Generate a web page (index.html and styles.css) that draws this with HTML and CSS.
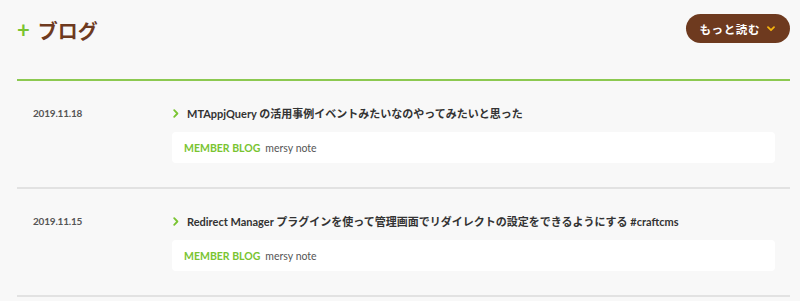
FILE: index.html
```html
<!DOCTYPE html>
<html lang="ja">
<head>
  <meta charset="UTF-8" />
  <title>ブログ</title>
  <link rel="stylesheet" href="styles.css">
</head>
<body>

  <section class="blog">
    <header>
      <h1><span class="plus">+</span>ブログ</h1>
      <a class="more" href="#">もっと読む
        <svg width="8" height="6" viewBox="0 0 8 6"><path d="M1 1.2 L4 4.2 L7 1.2" fill="none" stroke="#f6b40e" stroke-width="1.8" stroke-linecap="round" stroke-linejoin="round"/></svg>
      </a>
    </header>

    <ul class="posts">
      <li class="post">
        <div class="date">2019.11.18</div>
        <div class="body">
          <a class="title" href="#">
            <svg class="arrow" width="6" height="9" viewBox="0 0 6 9"><path d="M1.2 1.2 L4.4 4.5 L1.2 7.8" fill="none" stroke="#79c431" stroke-width="1.8" stroke-linecap="round" stroke-linejoin="round"/></svg>
            MTAppjQuery の活用事例イベントみたいなのやってみたいと思った
          </a>
          <div class="source"><span class="tag">MEMBER BLOG</span><span class="name">mersy note</span></div>
        </div>
      </li>
      <li class="post">
        <div class="date">2019.11.15</div>
        <div class="body">
          <a class="title" href="#">
            <svg class="arrow" width="6" height="9" viewBox="0 0 6 9"><path d="M1.2 1.2 L4.4 4.5 L1.2 7.8" fill="none" stroke="#79c431" stroke-width="1.8" stroke-linecap="round" stroke-linejoin="round"/></svg>
            Redirect Manager プラグインを使って管理画面でリダイレクトの設定をできるようにする #craftcms
          </a>
          <div class="source"><span class="tag">MEMBER BLOG</span><span class="name">mersy note</span></div>
        </div>
      </li>
    </ul>
  </section>

</body>
</html>
```

FILE: styles.css
```css
body {
  margin: 0;
  background: #f8f8f8;
  color: #333;
  font-family: 'Lato', 'Noto Sans CJK JP', sans-serif;
}

.blog {
  padding: 0 10px 0 17px;
}

header {
  display: flex;
  justify-content: space-between;
  align-items: center;
  height: 57px;
  padding-bottom: 22px;
}

h1 {
  margin: 0;
  font-size: 20px;
  font-weight: 700;
  color: #6e3a1f;
  display: flex;
  align-items: center;
  padding-top: 3px;
}

.plus {
  color: #79c431;
  font-size: 22px;
  margin-right: 8px;
  line-height: 1;
}

.more {
  display: flex;
  align-items: center;
  gap: 7px;
  height: 29px;
  padding: 0 15px 0 14px;
  border-radius: 15px;
  background: #6e3a1f;
  color: #fff;
  font-size: 11.5px;
  font-weight: 700;
  text-decoration: none;
  letter-spacing: 0.6px;
}

.posts {
  list-style: none;
  margin: 0;
  padding: 0;
  border-top: 2px solid #8cc950;
}

.post {
  display: flex;
  padding: 22px 15px 24px 16px;
  border-bottom: 2px solid #e2e2e2;
}

.date {
  width: 139px;
  flex-shrink: 0;
  font-size: 10px;
  font-weight: 700;
  color: #555;
  line-height: 20px;
  letter-spacing: -0.2px;
}

.body {
  flex: 1;
}

.title {
  display: flex;
  align-items: center;
  gap: 8px;
  height: 20px;
  font-size: 11px;
  font-weight: 700;
  color: #333;
  text-decoration: none;
  padding-left: 1px;
}

.source {
  margin-top: 9px;
  height: 31px;
  background: #fff;
  border-radius: 4px;
  display: flex;
  align-items: center;
  padding: 0 12px;
  gap: 5px;
}

.tag {
  color: #79c431;
  font-size: 10.5px;
  font-weight: 700;
}

.name {
  color: #555;
  font-size: 10.5px;
}
```
